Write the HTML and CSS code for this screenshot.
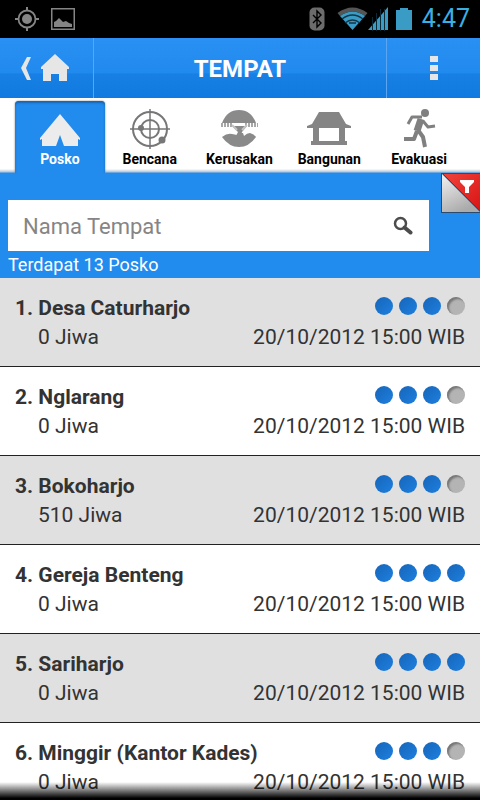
FILE: index.html
```html
<!DOCTYPE html>
<html lang="id">
<head>
  <meta charset="UTF-8" />
  <meta name="viewport" content="width=device-width, initial-scale=1">
  <title>Tempat</title>
  <link rel="stylesheet" href="styles.css">
</head>
<body>

  <div class="app">
    <div class="statusbar">
      <div class="status-left">
        <svg width="24" height="24" viewBox="0 0 24 24" fill="none" stroke="#858585">
          <circle cx="12" cy="12" r="8.5" stroke-width="1.8" />
          <circle cx="12" cy="12" r="5" fill="#858585" stroke="none" />
          <path d="M12 0v4M12 20v4M0 12h4M20 12h4" stroke-width="2" />
        </svg>
        <svg width="24" height="24" viewBox="0 0 24 24">
          <rect x="0.75" y="1.75" width="22.5" height="20.5" fill="none" stroke="#858585" stroke-width="1.5" />
          <path d="M3 20v-5l2-1 3-3 4 4 3-1 3 2 3 1v3z" fill="#858585" />
        </svg>
      </div>
      <div class="status-right">
        <svg class="bluetooth" width="16" height="24" viewBox="0 0 16 24">
          <rect x="0.5" y="0.5" width="15" height="23" rx="5" fill="#6c6c6c" />
          <path d="M4 8l8 8-4 4V4l4 4-8 8" fill="none" stroke="#000" stroke-width="1.4" />
        </svg>
        <svg class="wifi" width="31" height="24" viewBox="0 0 31 24">
          <path d="M0.500 6Q15.500-5 30.500 6L28 9Q15.500 0 3 9z" fill="#555" />
          <path d="M3 9Q15.500 0 28 9L15.500 23z" fill="#3a9bc4" />
          <path d="M5 12Q15.500 4 26 12M8 16Q15.500 10 23 16M12 16l7 0" fill="none" stroke="#123647" stroke-width="1.3" />
        </svg>
        <svg class="signal" width="20" height="24" viewBox="0 0 20 24">
          <path d="M0 23L20 0v23z" fill="#3a9bc4" />
          <path d="M4.500 10v14M8.500 6v18M12.500 2v22M16.500 2v22" stroke="#0b2a38" stroke-width="1" />
        </svg>
        <svg class="battery" width="16" height="24" viewBox="0 0 16 24">
          <path d="M0 3h4V1h8v2h4v20H0z" fill="#3a9bc4" />
        </svg>
        <span class="clock">4:47</span>
      </div>
    </div>

    <header class="titlebar">
      <button class="home" aria-label="Kembali">
        <svg width="48" height="28" viewBox="0 0 48 28" fill="#e6e6e6">
          <path d="M6 3h4L5 14l5 12H6L0 14z" />
          <path d="M34 0L48 13v2h-2v12h-8v-7h-8v7h-8V15h-2v-2z" />
        </svg>
      </button>
      <h1>TEMPAT</h1>
      <button class="more" aria-label="Menu">
        <svg width="8" height="24" viewBox="0 0 8 24" fill="#e6e6e6">
          <path d="M0 0h8v6H0zM0 9h8v6H0zM0 18h8v6H0z" />
        </svg>
      </button>
    </header>

    <nav class="tabs">
      <a href="#posko" class="tab active">
        <svg width="40" height="40" viewBox="0 0 40 40">
          <path d="M20 5L40 29v2l-2-1v7H24L20 26l-4 11H2v-7l-2 1v-2z" fill="#ececec" />
        </svg>
        <span>Posko</span>
      </a>
      <a href="#bencana" class="tab">
        <svg width="40" height="40" viewBox="0 0 40 40" fill="none" stroke="#777">
          <circle cx="20" cy="20" r="17" stroke-width="2" />
          <circle cx="20" cy="20" r="9" stroke-width="2" />
          <path d="M20 0v40M0 20h40" stroke-width="1.500" />
          <circle cx="11" cy="19" r="3" fill="#777" stroke="none" />
          <circle cx="32" cy="31" r="3.500" fill="#777" stroke="none" />
        </svg>
        <span>Bencana</span>
      </a>
      <a href="#kerusakan" class="tab">
        <svg width="40" height="40" viewBox="0 0 40 40" fill="#8a8a8a">
          <path d="M3 14Q8 1 20 1T37 14z" />
          <path d="M13 17h15l-5 6-1 4h-5l2-4z" />
          <path d="M2 16h12M26 16h13" stroke="#a8a8a8" stroke-width="4" stroke-dasharray="2 1" />
          <path d="M13 16l5 5M28 16l-5 5" stroke="#c4c4c4" stroke-width="2" />
          <path d="M3 28q5-4 10-3l5 1 1-2h5l1 3q3-3 6-3 4 1 6 4Q30 38 20 38T3 28z" />
        </svg>
        <span>Kerusakan</span>
      </a>
      <a href="#bangunan" class="tab">
        <svg width="44" height="40" viewBox="0 0 44 40">
          <path d="M12 3h20l7 12 5 2v2h-6v13h2v4H4v-4h2V19H0v-2l5-2zM12 19v13h20V19z" fill="#858585" fill-rule="evenodd" />
        </svg>
        <span>Bangunan</span>
      </a>
      <a href="#evakuasi" class="tab">
        <svg width="40" height="40" viewBox="0 0 40 40" fill="none" stroke="#808080" stroke-linejoin="round">
          <circle cx="26" cy="4" r="4" fill="#808080" stroke="none" />
          <path d="M22 10l-4 12" stroke-width="7" />
          <path d="M23 8H13l-4 7M24 12l5 6 7-1" stroke-width="3" />
          <path d="M18 22l-3 8H5M19 21l5 7 2 10" stroke-width="4" />
        </svg>
        <span>Evakuasi</span>
      </a>
    </nav>

    <section class="search">
      <form class="search-box">
        <input type="text" placeholder="Nama Tempat" aria-label="Nama Tempat">
        <button type="button" aria-label="Cari">
          <svg width="20" height="20" viewBox="0 0 20 20" fill="none" stroke="#4c4c4c">
            <circle cx="7.500" cy="7.500" r="5.500" stroke-width="2.500" />
            <path d="M11.500 11.500l6 5" stroke-width="4" stroke-linecap="round" />
          </svg>
        </button>
      </form>
      <p>Terdapat 13 Posko</p>
      <button class="filter" aria-label="Filter">
        <svg width="39" height="40" viewBox="0 0 39 40">
          <defs>
            <linearGradient id="silver" x1="0" y1="0" x2="0.500" y2="1">
              <stop offset="0" stop-color="#f2f2f2" />
              <stop offset="1" stop-color="#aaa" />
            </linearGradient>
            <linearGradient id="red" x1="0" y1="0" x2="1" y2="1">
              <stop offset="0" stop-color="#f0433c" />
              <stop offset="1" stop-color="#d81414" />
            </linearGradient>
          </defs>
          <path d="M0 0h39v40H0z" fill="#2a4a70" />
          <path d="M1 1l38 38H1z" fill="url(#silver)" />
          <path d="M2 1h37v37z" fill="url(#red)" />
          <path d="M1 0l38 38" stroke="#8c2226" stroke-width="1" />
          <path d="M19 7h14v2l-5 5v6h-4v-6l-5-5z" fill="#fff" />
        </svg>
      </button>
    </section>

    <ol class="places">
      <li>
        <div class="row">
          <h2>1. Desa Caturharjo</h2>
          <div class="dots"><i></i><i></i><i></i><i class="off"></i></div>
        </div>
        <div class="row">
          <span class="count">0 Jiwa</span>
          <time>20/10/2012 15:00 WIB</time>
        </div>
      </li>
      <li>
        <div class="row">
          <h2>2. Nglarang</h2>
          <div class="dots"><i></i><i></i><i></i><i class="off"></i></div>
        </div>
        <div class="row">
          <span class="count">0 Jiwa</span>
          <time>20/10/2012 15:00 WIB</time>
        </div>
      </li>
      <li>
        <div class="row">
          <h2>3. Bokoharjo</h2>
          <div class="dots"><i></i><i></i><i></i><i class="off"></i></div>
        </div>
        <div class="row">
          <span class="count">510 Jiwa</span>
          <time>20/10/2012 15:00 WIB</time>
        </div>
      </li>
      <li>
        <div class="row">
          <h2>4. Gereja Benteng</h2>
          <div class="dots"><i></i><i></i><i></i><i></i></div>
        </div>
        <div class="row">
          <span class="count">0 Jiwa</span>
          <time>20/10/2012 15:00 WIB</time>
        </div>
      </li>
      <li>
        <div class="row">
          <h2>5. Sariharjo</h2>
          <div class="dots"><i></i><i></i><i></i><i></i></div>
        </div>
        <div class="row">
          <span class="count">0 Jiwa</span>
          <time>20/10/2012 15:00 WIB</time>
        </div>
      </li>
      <li>
        <div class="row">
          <h2>6. Minggir (Kantor Kades)</h2>
          <div class="dots"><i></i><i></i><i></i><i class="off"></i></div>
        </div>
        <div class="row">
          <span class="count">0 Jiwa</span>
          <time>20/10/2012 15:00 WIB</time>
        </div>
      </li>
    </ol>
  </div>

</body>
</html>
```
FILE: styles.css
```css
* {
  box-sizing: border-box;
}

body {
  margin: 0;
  font-family: Roboto, 'Noto Sans', sans-serif;
  color: #333;
  background: #fff;
}

h1, h2, p, ol {
  margin: 0;
  padding: 0;
}

button {
  display: flex;
  align-items: center;
  justify-content: center;
  padding: 0;
  border: none;
  background: none;
  cursor: pointer;
}

svg {
  display: block;
}

.app {
  display: flex;
  flex-direction: column;
  height: 100vh;
  overflow: hidden;
}

/* status bar */
.statusbar {
  display: flex;
  flex: none;
  justify-content: space-between;
  align-items: center;
  height: 38px;
  padding: 0 10px 0 15px;
  background: #000;
}

.status-left,
.status-right {
  display: flex;
  align-items: center;
}

.status-left {
  gap: 12px;
}

.wifi {
  margin-left: 12px;
}

.battery {
  margin: 0 10px 0 8px;
}

.clock {
  color: #3ab0e2;
  font-size: 25px;
  line-height: 38px;
}

/* title bar */
.titlebar {
  display: flex;
  flex: none;
  height: 60px;
  background: linear-gradient(#2a90f3, #218aee 58%, #1880e4 60%, #107ae0);
}

.titlebar h1 {
  flex: 1;
  color: #fff;
  font-size: 24px;
  line-height: 62px;
  text-align: center;
}

.home,
.more {
  width: 94px;
}

.home {
  padding-right: 4px;
  border-right: 1px solid #5aa6f2;
}

.more {
  border-left: 1px solid #5aa6f2;
}

/* tabs */
.tabs {
  display: grid;
  flex: none;
  grid-template-columns: repeat(5, 1fr);
  height: 75px;
  padding: 3px 16px 0 15px;
  background: linear-gradient(#fff 71px, #b4c3d4 74px, #228bee 75px);
}

.tab {
  display: flex;
  flex-direction: column;
  align-items: center;
  padding-top: 8px;
  color: #000;
  font-size: 14px;
  font-weight: bold;
  line-height: 20px;
  text-decoration: none;
}

.tab.active {
  color: #fff;
  background: #228bee;
  border-radius: 4px 4px 0 0;
  box-shadow: inset 0 2px 2px #1966b4, 0 0 2px #777;
  clip-path: inset(-2px -3px 0);
}

/* search */
.search {
  position: relative;
  flex: none;
  padding: 27px 51px 0 8px;
  background: #228bee;
}

.search-box {
  display: flex;
  height: 51px;
  padding: 0 16px 0 15px;
  background: #fff;
}

.search-box input {
  flex: 1;
  min-width: 0;
  padding: 2px 0 0;
  border: none;
  outline: none;
  background: none;
  font: 22px Roboto, 'Noto Sans', sans-serif;
}

.search-box input::placeholder {
  color: #858585;
}

.search p {
  color: #fff;
  font-size: 18px;
  line-height: 27px;
}

.filter {
  position: absolute;
  top: 0;
  right: 0;
}

/* list of places */
.places {
  position: relative;
  flex: 1;
  min-height: 0;
  overflow: hidden;
  list-style: none;
}

.places::after {
  content: "";
  position: absolute;
  right: 0;
  bottom: 0;
  left: 0;
  height: 18px;
  background: linear-gradient(transparent, #000 90%);
}

.places li {
  height: 89px;
  padding: 16px 15px 0;
  border-bottom: 1px solid #222;
  font-size: 21px;
  line-height: 29px;
}

.places li:nth-child(odd) {
  background: #e0e0e0;
}

.row {
  display: flex;
  justify-content: space-between;
}

.places h2 {
  font-size: 21px;
}

.count {
  padding-left: 23px;
}

.dots {
  display: flex;
  gap: 6px;
  padding-top: 3px;
}

.dots i {
  width: 18px;
  height: 18px;
  border-radius: 50%;
  background: linear-gradient(135deg, #1765b8, #1d80e0);
}

.dots .off {
  background: #b4b4b4;
  box-shadow: inset 2px 2px 2px #777;
}
```
